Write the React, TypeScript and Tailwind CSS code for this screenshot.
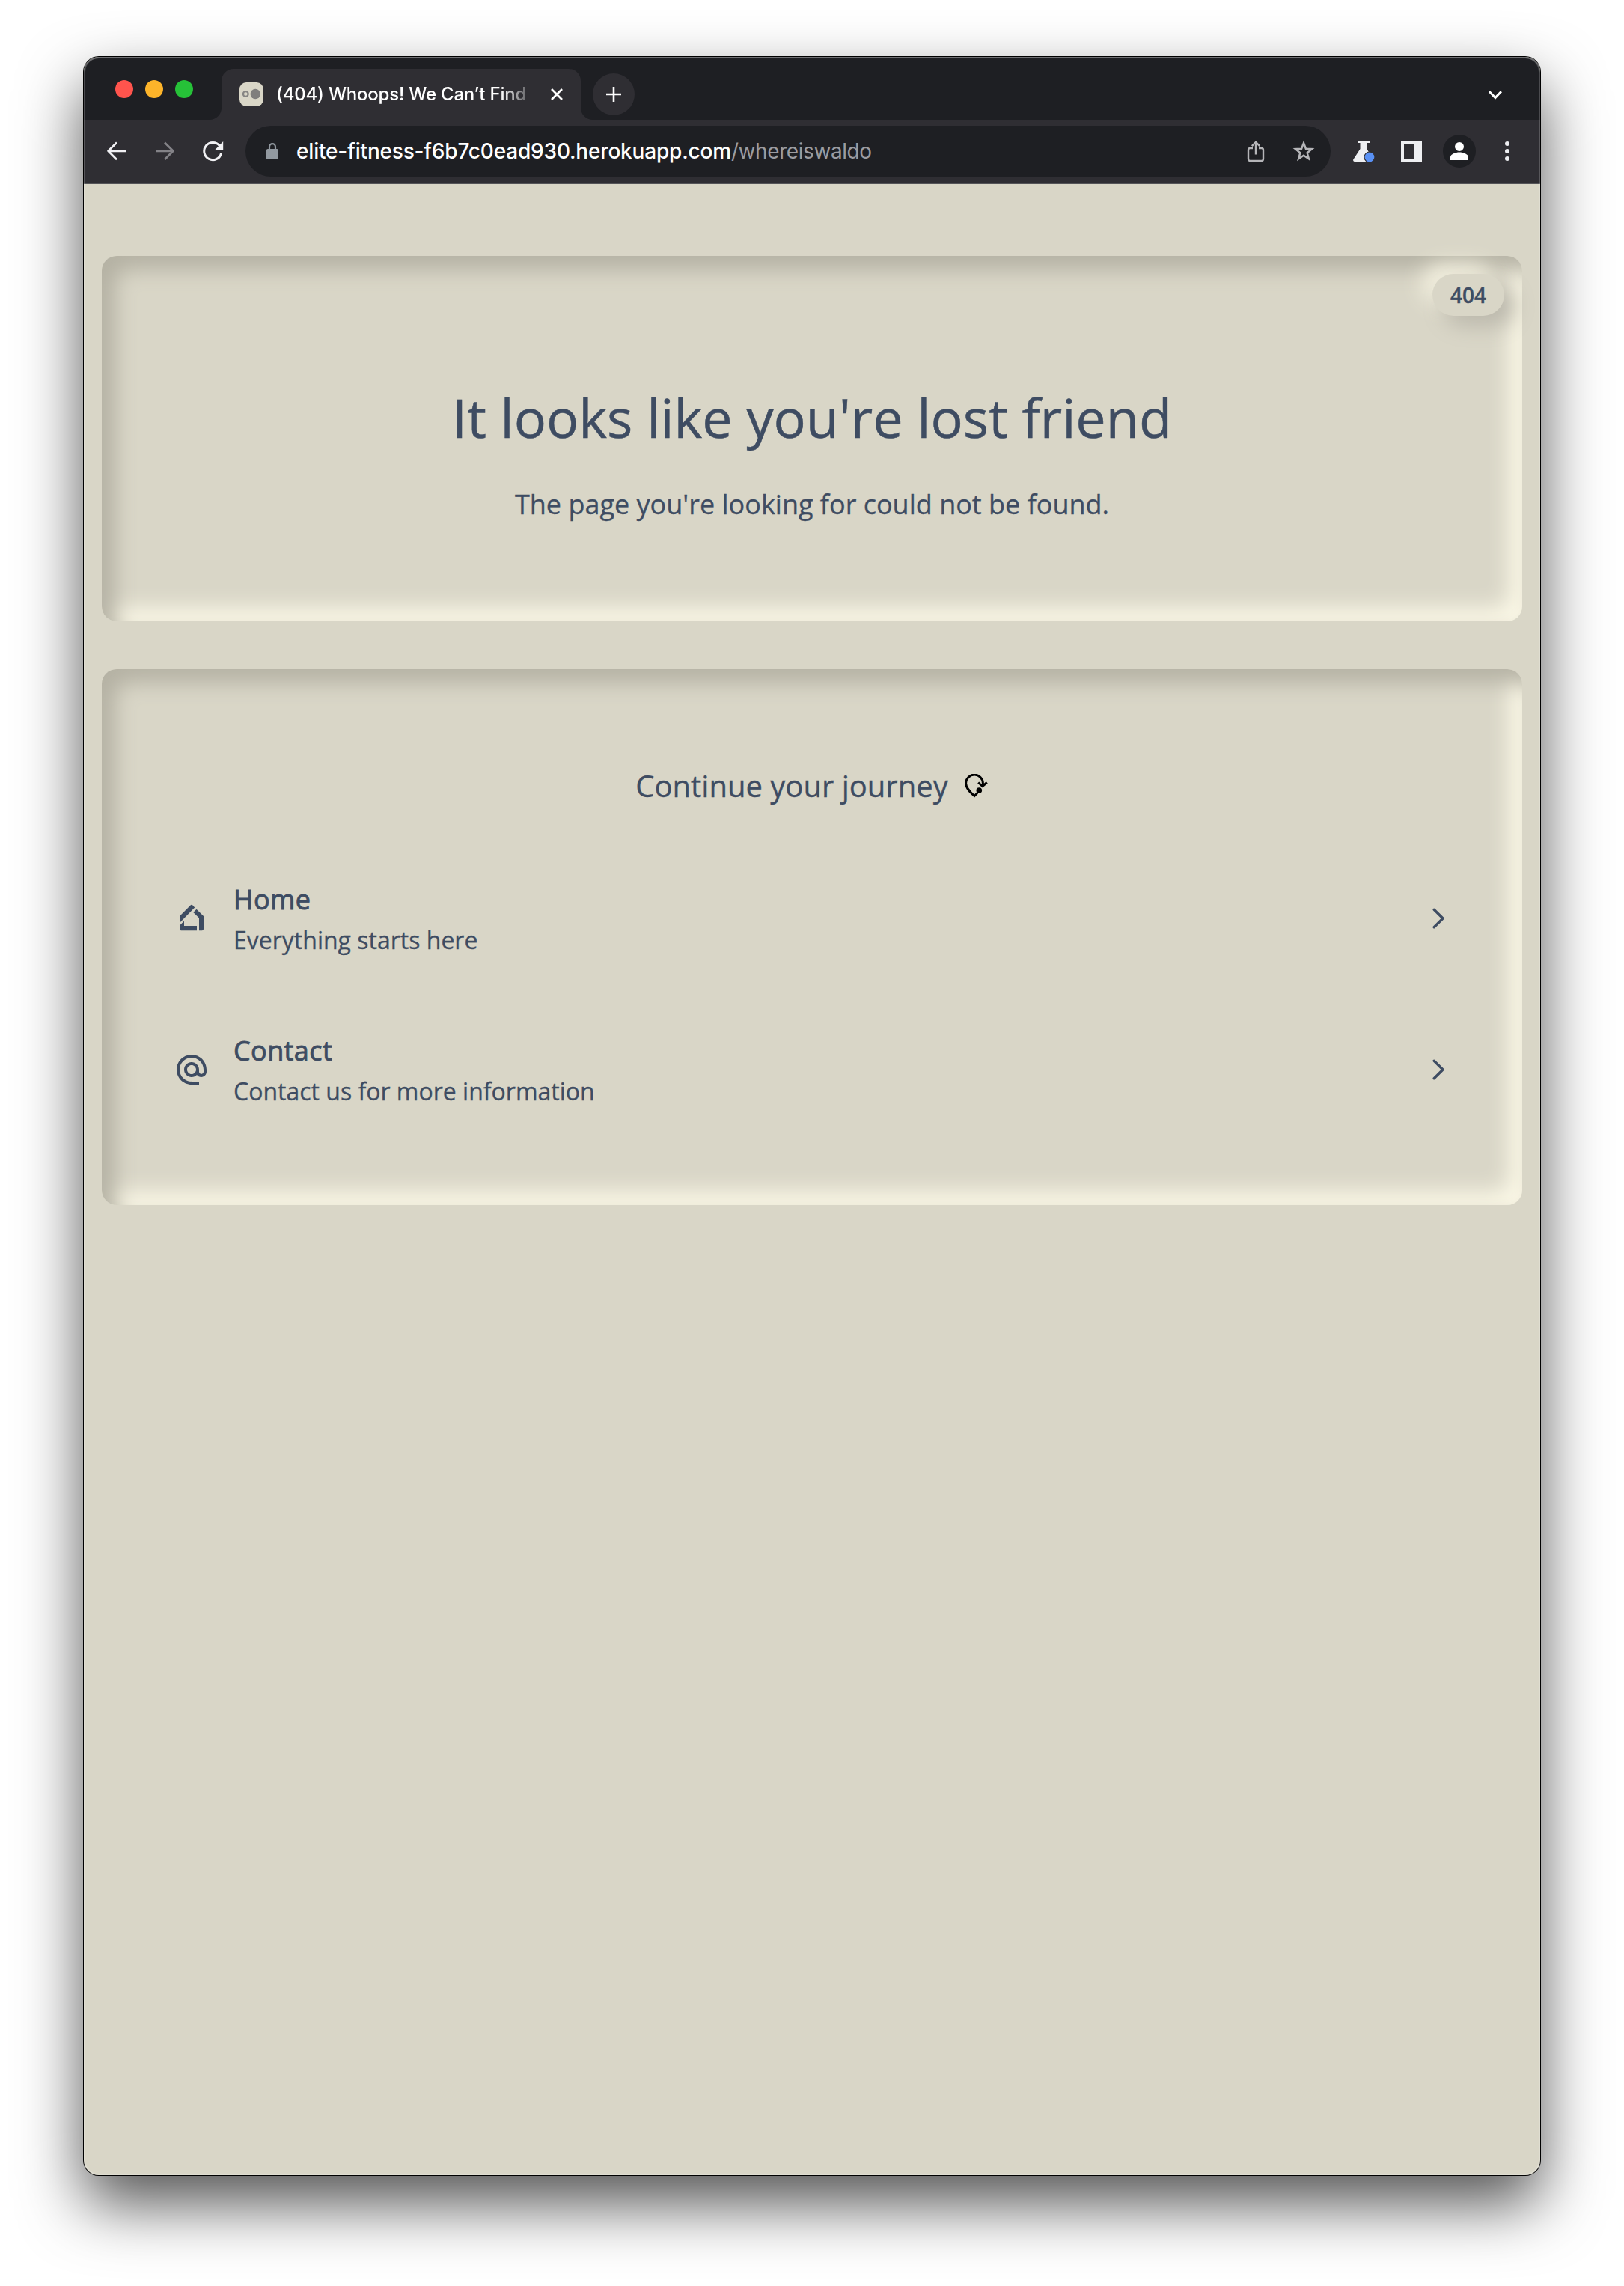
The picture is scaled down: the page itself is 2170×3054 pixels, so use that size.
import type { ReactNode } from "react";
import { MdAlternateEmail } from "react-icons/md";

function TabStrip() {
  return (
    <div className="flex h-[84px] items-end bg-[#1e1f23]">
      <div className="flex h-full w-[168px] items-start gap-4 pt-[31px] pl-[42px]">
        <span className="size-6 rounded-full bg-[#ff544d]" />
        <span className="size-6 rounded-full bg-[#fdb42a]" />
        <span className="size-6 rounded-full bg-[#26c138]" />
      </div>
      <Flare d="M16 0V16H0A16 16 0 0 0 16 0Z" />
      <div className="flex h-[68px] w-[480px] items-center rounded-t-[16px] bg-[#2f2e33] pl-6">
        <svg className="size-8 shrink-0" viewBox="0 0 32 32">
          <rect width="32" height="32" rx="9" fill="#d9d6c7" />
          <circle cx="8.3" cy="15.5" r="3.4" fill="none" stroke="#868583" strokeWidth="2.2" />
          <circle cx="21.3" cy="15.5" r="6.7" fill="#7f7e7d" />
        </svg>
        <div className="ml-[17px] w-[350px] shrink-0 font-[Inter,sans-serif] text-[24px] leading-8 font-medium tracking-[-0.2px] whitespace-nowrap text-white [mask-image:linear-gradient(to_right,black_300px,transparent_348px)]">
          (404) Whoops! We Can’t Find
        </div>
        <svg className="ml-[17px] size-4 shrink-0" viewBox="0 0 16 16" stroke="#fff" strokeWidth="2.7">
          <path d="M1 1l14 14M15 1L1 15" />
        </svg>
      </div>
      <Flare d="M0 0V16H16A16 16 0 0 1 0 0Z" />
      <div className="mb-[6px] flex size-14 items-center justify-center rounded-full bg-[#2f2e33]">
        <svg className="size-5" viewBox="0 0 20 20" stroke="#fff" strokeWidth="2.6">
          <path d="M10 0v20M0 10h20" />
        </svg>
      </div>
      <svg className="mr-[51px] mb-[27px] ml-auto h-3 w-[18px]" viewBox="0 0 18 12" fill="none" stroke="#fff" strokeWidth="3">
        <path d="M1 1.2l8 8.3 8-8.3" />
      </svg>
    </div>
  );
}

function Flare({ d }: { d: string }) {
  return (
    <svg className="size-4 shrink-0" viewBox="0 0 16 16" fill="#2f2e33">
      <path d={d} />
    </svg>
  );
}

function Toolbar() {
  return (
    <div className="flex h-[86px] items-center border-b-2 border-[#545458] bg-[#2f2e33]">
      <svg className="ml-[31px] h-[26px] w-[26px]" viewBox="0 0 26 26" fill="none" stroke="#f1f1f4" strokeWidth="2.7" strokeLinejoin="round">
        <path d="M13 1.5L1.6 12.8 13 24.2M1.6 12.8H25" />
      </svg>
      <svg className="ml-[38px] h-[26px] w-[26px]" viewBox="0 0 26 26" fill="none" stroke="#838287" strokeWidth="2.7" strokeLinejoin="round">
        <path d="M13 1.5l11.4 11.3L13 24.2M24.4 12.8H1" />
      </svg>
      <svg className="ml-[38px] h-[28px] w-[28px]" viewBox="0 0 28 28" fill="none" stroke="#f1f1f4" strokeWidth="3">
        <path d="M22.4 6.8A11.6 11.6 0 1 0 24.6 17" />
        <path d="M27.2 1v11H16.5z" fill="#f1f1f4" stroke="none" />
      </svg>
      <div className="ml-[29px] flex h-[68px] w-[1450px] items-center rounded-full bg-[#1e1f23] pl-7">
        <svg className="h-[22px] w-4" viewBox="0 0 16 22">
          <path d="M4 9V5.2a4 4 0 0 1 8 0V9" fill="none" stroke="#9299a0" strokeWidth="2.2" />
          <rect y="8" width="16" height="14" rx="1.8" fill="#9299a0" />
        </svg>
        <div className="ml-6 font-[Inter,sans-serif] text-[28px] leading-9 tracking-[-0.42px] whitespace-nowrap text-[#9b9ca1]">
          <span className="font-medium tracking-[-0.18px] text-white">elite-fitness-f6b7c0ead930.herokuapp.com</span>/whereiswaldo
        </div>
        <svg className="mr-[37px] ml-auto h-[29px] w-[24px]" viewBox="0 0 24 29" fill="none" stroke="#b5b5b8" strokeWidth="2.4">
          <path d="M8 10H4.4A2.4 2.4 0 0 0 2 12.4V24.6A2.4 2.4 0 0 0 4.4 27H19.6A2.4 2.4 0 0 0 22 24.6V12.4A2.4 2.4 0 0 0 19.6 10H16M12 18.5V2.5M6.8 7.2L12 2l5.2 5.2" />
        </svg>
        <svg className="mr-[21px] h-[30px] w-[30px]" viewBox="0 0 30 30" fill="none" stroke="#b5b5b8" strokeWidth="2.5">
          <path d="M15 4l2.9 7.7 8.2.4-6.4 5.2 2.2 8-6.9-4.5-6.9 4.5 2.2-8-6.4-5.2 8.2-.4z" />
        </svg>
      </div>
      <svg className="ml-[30px] h-[30px] w-[30px]" viewBox="0 0 30 30">
        <path d="M6 1h16v3h-3v9l7 11.5a3 3 0 0 1-2.5 4.5H2A2 2 0 0 1 .4 26L9.5 12V4H6z" fill="#eeeff2" />
        <circle cx="22" cy="23" r="7" fill="#5990f4" stroke="#2f2e33" strokeWidth="1.2" />
      </svg>
      <svg className="ml-[34px] size-7" viewBox="0 0 28 28">
        <path d="M0 0h28v28H0zM4 4v20h14V4z" fill="#eeeff2" fillRule="evenodd" />
      </svg>
      <div className="ml-7 flex size-11 items-center justify-center rounded-full bg-[#1e1f23]">
        <svg className="size-6" viewBox="0 0 24 24" fill="#fff">
          <circle cx="12" cy="6" r="6" />
          <path d="M0 24v-4c0-4 7-6.5 12-6.5S24 16 24 20v4z" />
        </svg>
      </div>
      <svg className="ml-[39px] h-[26px] w-1.5" viewBox="0 0 6 26" fill="#eeeff2">
        <circle cx="3" cy="3" r="3" />
        <circle cx="3" cy="13" r="3" />
        <circle cx="3" cy="23" r="3" />
      </svg>
    </div>
  );
}

function LinkRow({ icon, title, text }: { icon: ReactNode; title: string; text: string }) {
  return (
    <a className="flex items-center">
      <div className="size-12 shrink-0">{icon}</div>
      <div className="ml-8 flex-1">
        <div className="text-[36px] leading-14 tracking-[0.4px] [-webkit-text-stroke:0.9px_currentColor]">{title}</div>
        <div className="mt-[2px] text-[32px] leading-12">{text}</div>
      </div>
      <svg className="mr-2 h-[28px] w-4" viewBox="0 0 16 28" fill="none" stroke="currentColor" strokeWidth="3.4" strokeLinecap="round">
        <path d="M2.2 2.2l11.8 11.8L2.2 25.8" />
      </svg>
    </a>
  );
}

function HomeIcon() {
  return (
    <svg className="size-12" viewBox="0 0 48 48" fill="currentColor">
      <path d="M22.5 6.6Q24 5 25.5 6.6L28.2 9.6 8 30V21z" />
      <path d="M30.5 11.8L40 21V38.2a2 2 0 0 1-2 2H34V23.5L26.3 15.9z" />
      <path d="M8 33.5L14 27.5V34H31V40.2H10a2 2 0 0 1-2-2z" />
    </svg>
  );
}

export default function App() {
  return (
    <div className="h-[3054px] w-[2170px] overflow-hidden bg-white px-[112px] pt-[76px]">
      <div className="relative flex h-[2830px] w-[1946px] flex-col rounded-[20px] bg-[#d9d6c7] shadow-[0_0_0_1px_#000,0_38px_84px_rgba(0,0,0,0.68)]">
        <div className="overflow-hidden rounded-t-[20px]">
          <TabStrip />
          <Toolbar />
        </div>
        <main className="flex flex-col gap-16 px-6 pt-24 font-['Open_Sans',sans-serif] text-[#3e4c62]">
          <section className="relative h-[488px] rounded-[20px] pt-[175px] text-center shadow-[inset_18px_18px_28px_#b5b2a4,inset_-18px_-18px_28px_#faf7e6]">
            <h1 className="text-[72px] leading-20 [-webkit-text-stroke:0.5px_currentColor]">It looks like you're lost friend</h1>
            <p className="mt-[49px] text-[36px] leading-14 [-webkit-text-stroke:0.3px_currentColor]">
              The page you're looking for could not be found.
            </p>
            <span className="absolute top-6 right-6 flex h-14 w-24 items-center justify-center rounded-full bg-[#d9d6c7] text-[28px] font-semibold shadow-[14px_14px_28px_#bcb9ad,-14px_-14px_28px_#f3f0df] [-webkit-text-stroke:0.4px_currentColor]">
              404
            </span>
          </section>
          <section className="h-[716px] rounded-[20px] px-24 pt-32 shadow-[inset_18px_18px_28px_#b5b2a4,inset_-18px_-18px_28px_#faf7e6]">
            <h2 className="flex items-center justify-center text-[40px] leading-14 [-webkit-text-stroke:0.3px_currentColor]">
              Continue your journey
              <svg className="ml-[21px] h-[32px] w-[33px]" viewBox="0 0 33 32" fill="none" stroke="#000" strokeWidth="3">
                <path d="M25.4 14.5V12.5A11.4 11.4 0 0 0 2.6 12.5C2.6 19 8.5 24.5 14 29.5L18 25.5M19.2 11.5l5.6 5 6-5" />
                <circle cx="20.3" cy="22" r="3.8" fill="#000" stroke="none" />
              </svg>
            </h2>
            <nav className="mt-24 flex flex-col gap-24 [-webkit-text-stroke:0.3px_currentColor]">
              <LinkRow icon={<HomeIcon />} title="Home" text="Everything starts here" />
              <LinkRow icon={<MdAlternateEmail className="size-12" />} title="Contact" text="Contact us for more information" />
            </nav>
          </section>
        </main>
        <div className="pointer-events-none absolute inset-0 rounded-[20px] shadow-[inset_0_0_0_2px_rgba(255,255,255,0.2),inset_0_2px_0_rgba(255,255,255,0.2)]" />
      </div>
    </div>
  );
}
